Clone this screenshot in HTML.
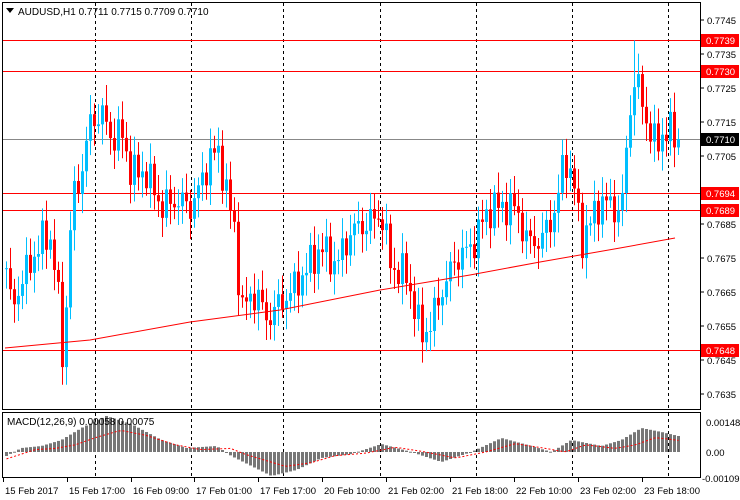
<!DOCTYPE html>
<html><head><meta charset="utf-8"><style>
body{margin:0;background:#fff;width:740px;height:500px;overflow:hidden;font-family:"Liberation Sans",sans-serif}
svg{display:block}
text{font-family:"Liberation Sans",sans-serif;font-size:10px;fill:#000}
#ax text{font-size:9.5px}
</style></head><body>
<svg id="s" width="740" height="500" xmlns="http://www.w3.org/2000/svg">
<rect width="740" height="500" fill="#fff"/>
<g id="grid"></g>
<g id="c"></g>
<g id="m"></g>
<rect x="2.5" y="2.5" width="698" height="407" fill="none" stroke="#000"/>
<rect x="2.5" y="412.5" width="698" height="65" fill="none" stroke="#000"/>
<path d="M6 8h8l-4 5z" fill="#000"/>
<text x="18" y="15">AUDUSD,H1  0.7711 0.7715 0.7709 0.7710</text>
<text x="7" y="425">MACD(12,26,9) 0.00058 0.00075</text>
<g id="ax"></g>
</svg>
<script>
var NS="http://www.w3.org/2000/svg";
function el(p,t,a,txt){var e=document.createElementNS(NS,t);for(var k in a)e.setAttribute(k,a[k]);if(txt!=null)e.textContent=txt;document.getElementById(p).appendChild(e);return e;}
function Y(p){return 20+(0.7745-p)*34000;}
[95,191,283,380,476,572,668].forEach(function(x){
 el('grid','line',{x1:x+.5,y1:3,x2:x+.5,y2:409,stroke:'#000','stroke-dasharray':'3,3'});
 el('grid','line',{x1:x+.5,y1:413,x2:x+.5,y2:477,stroke:'#000','stroke-dasharray':'3,3'});
});
[[0.7739,'#f00'],[0.7730,'#f00'],[0.7694,'#f00'],[0.7689,'#f00'],[0.7648,'#f00'],[0.7710,'#888']].forEach(function(h){
 var y=Math.round(Y(h[0]))+.5;el('grid','line',{x1:3,y1:y,x2:700,y2:y,stroke:h[1]});
});
var pts=[[5,.7672],[10,.7660],[20,.7668],[40,.7680],[48,.7682],[55,.7670],[62,.7643],[70,.7690],[80,.7700],[88,.7714],[100,.7718],[110,.7710],[120,.7712],[130,.7700],[145,.7700],[160,.7690],[175,.7692],[190,.7690],[200,.7697],[210,.7706],[218,.7705],[225,.7695],[233,.7683],[240,.7660],[255,.7665],[265,.7657],[280,.7662],[295,.7667],[310,.7674],[320,.7678],[335,.7673],[350,.7683],[365,.7685],[380,.7688],[390,.7672],[405,.7670],[420,.7652],[430,.7656],[440,.7665],[455,.7675],[470,.7678],[480,.7685],[490,.7690],[505,.7690],[515,.7690],[525,.7680],[540,.7680],[555,.7690],[563,.7705],[572,.7698],[580,.7680],[590,.7686],[600,.7692],[612,.7690],[620,.7688],[628,.7718],[634,.7728],[640,.7722],[648,.7712],[655,.7708],[662,.7712],[670,.7712],[676,.7710]];
function f(x){for(var i=0;i<pts.length-1;i++){if(x<=pts[i+1][0]){var a=pts[i],b=pts[i+1];return a[1]+(b[1]-a[1])*(x-a[0])/(b[0]-a[0]);}}return pts[pts.length-1][1];}
var prev=f(5);
for(var i=0;i<169;i++){
 var x=5+4*i;var c=f(x)+0.0006*Math.sin(i*2.3)*Math.cos(i*0.7);
 if(x==677)c=.7710;
 var o=prev;var hi=Math.max(o,c)+0.0002+0.0004*Math.abs(Math.sin(i*1.7));var lo=Math.min(o,c)-0.0002-0.0004*Math.abs(Math.cos(i*1.3));
 if(x==633)hi=.7739;
 var col=c>=o?'#00bfff':'#f00';
 el('c','line',{x1:x+1.5,y1:Y(hi),x2:x+1.5,y2:Y(lo),stroke:col});
 var yt=Y(Math.max(o,c)),yb=Y(Math.min(o,c));
 el('c','rect',{x:x,y:yt,width:3,height:Math.max(1,yb-yt),fill:col});
 prev=c;
}
var ma=[[5,348],[90,340],[190,322],[280,310],[380,290],[470,275],[540,262],[620,248],[675,238]];
el('c','polyline',{points:ma.map(function(p){return p.join(',')}).join(' '),fill:'none',stroke:'#f00'});
var mh=[[5,456],[20,448],[40,446],[60,440],[80,428],[105,416],[130,424],[160,440],[185,448],[215,446],[230,456],[250,466],[270,476],[295,470],[320,458],[350,454],[380,444],[410,452],[440,462],[470,452],[500,438],[530,446],[550,452],[570,440],[600,446],[620,440],[640,428],[660,432],[677,436]];
function g(x){for(var i=0;i<mh.length-1;i++){if(x<=mh[i+1][0]){var a=mh[i],b=mh[i+1];return a[1]+(b[1]-a[1])*(x-a[0])/(b[0]-a[0]);}}return mh[mh.length-1][1];}
var sig=[];
for(var i=0;i<169;i++){var x=5+4*i;var y=g(x);var z=452;
 el('m','rect',{x:x,y:Math.min(y,z),width:3,height:Math.max(1,Math.abs(y-z)),fill:'#777'});
 sig.push([x+1.5,g(x-14)*0.6+z*0.4]);}
el('m','polyline',{points:sig.map(function(p){return p.join(',')}).join(' '),fill:'none',stroke:'#f00','stroke-dasharray':'2,2'});
[[.7745],[.7735],[.7725],[.7715],[.7705],[.7685],[.7675],[.7665],[.7655],[.7645],[.7635]].forEach(function(p){
 var y=Y(p[0]);el('ax','line',{x1:700,y1:y,x2:704,y2:y,stroke:'#000'});el('ax','text',{x:707,y:y+4},p[0].toFixed(4));});
[[.7739,'#f00'],[.7730,'#f00'],[.7694,'#f00'],[.7689,'#f00'],[.7648,'#f00'],[.7710,'#000']].forEach(function(p){
 var y=Math.round(Y(p[0]));el('ax','rect',{x:701,y:y-6,width:38,height:13,fill:p[1]});var t=el('ax','text',{x:706,y:y+4},p[0].toFixed(4));t.style.fill='#fff';});
[[422,'0.00148',706],[452,'0.00',706],[478,'-0.00109',702]].forEach(function(p){el('ax','text',{x:p[2],y:p[0]+4},p[1]);});
[[3,'15 Feb 2017'],[67,'15 Feb 17:00'],[131,'16 Feb 09:00'],[194,'17 Feb 01:00'],[258,'17 Feb 17:00'],[322,'20 Feb 10:00'],[386,'21 Feb 02:00'],[450,'21 Feb 18:00'],[514,'22 Feb 10:00'],[578,'23 Feb 02:00'],[642,'23 Feb 18:00']].forEach(function(p){
 el('ax','line',{x1:p[0]+.5,y1:478,x2:p[0]+.5,y2:482,stroke:'#000'});el('ax','text',{x:p[0]+2,y:494},p[1]);});
</script>
</body></html>
